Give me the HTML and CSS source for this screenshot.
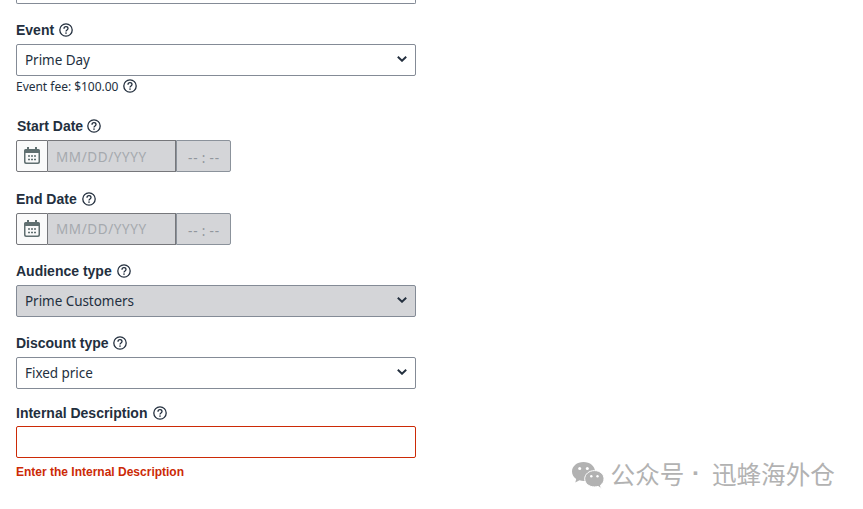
FILE: index.html
```
<!DOCTYPE html>
<html lang="en">
<head>
<meta charset="utf-8">
<title>Promotion details</title>
<link rel="stylesheet" href="styles.css">
</head>
<body>
<svg class="defs" aria-hidden="true">
  <symbol id="help" viewBox="0 0 14 14"><circle cx="7" cy="7" r="6.2" fill="none" stroke="currentColor" stroke-width="1.3"/><path d="M5 5.7C5 4.4 5.8 3.7 7 3.7s2 .7 2 1.8c0 1.4-2 1.5-2 3" fill="none" stroke="currentColor" stroke-width="1.3"/><rect x="6.3" y="9.4" width="1.4" height="1.4" fill="currentColor"/></symbol>
  <symbol id="chevron" viewBox="0 0 10 6"><path d="M.8.8 5 4.8 9.2.8" fill="none" stroke="currentColor" stroke-width="1.9"/></symbol>
  <symbol id="calendar" viewBox="0 0 16 17"><path d="M3 0h2v2h6V0h2v2h1.500a1.500 1.500 0 0 1 1.500 1.500V15a2 2 0 0 1-2 2H2a2 2 0 0 1-2-2V3.500A1.500 1.500 0 0 1 1.500 2H3zM1.500 6v8.500a1 1 0 0 0 1 1h11a1 1 0 0 0 1-1V6z" fill="currentColor" fill-rule="evenodd"/><path d="M4 9h2m1 0h2m1 0h2M4 12.500h2m1 0h2m1 0h2" stroke="currentColor" stroke-width="1.700"/></symbol>
</svg>
<main class="form">
  <div class="select cut"></div>
  <section class="field event">
    <div class="label"><span>Event</span><svg class="help"><use href="#help"/></svg></div>
    <div class="select"><span>Prime Day</span><svg class="chevron"><use href="#chevron"/></svg></div>
    <div class="fee"><span>Event fee: $100.00</span><svg class="help"><use href="#help"/></svg></div>
  </section>
  <section class="field start">
    <div class="label"><span>Start Date</span><svg class="help"><use href="#help"/></svg></div>
    <div class="datetime"><div class="cal"><svg><use href="#calendar"/></svg></div><div class="date"><span>MM/DD/YYYY</span></div><div class="time">--&thinsp;:&thinsp;--</div></div>
  </section>
  <section class="field end">
    <div class="label"><span>End Date</span><svg class="help"><use href="#help"/></svg></div>
    <div class="datetime"><div class="cal"><svg><use href="#calendar"/></svg></div><div class="date"><span>MM/DD/YYYY</span></div><div class="time">--&thinsp;:&thinsp;--</div></div>
  </section>
  <section class="field audience">
    <div class="label"><span>Audience type</span><svg class="help"><use href="#help"/></svg></div>
    <div class="select disabled"><span>Prime Customers</span><svg class="chevron"><use href="#chevron"/></svg></div>
  </section>
  <section class="field discount">
    <div class="label"><span>Discount type</span><svg class="help"><use href="#help"/></svg></div>
    <div class="select"><span>Fixed price</span><svg class="chevron"><use href="#chevron"/></svg></div>
  </section>
  <section class="field internal">
    <div class="label"><span>Internal Description</span><svg class="help"><use href="#help"/></svg></div>
    <div class="select invalid"></div>
    <div class="error">Enter the Internal Description</div>
  </section>
</main>
<aside class="watermark" lang="zh-CN">
  <svg viewBox="0 0 32 27"><path d="M11.500 0C5 0 0 4.200 0 9.500c0 3 1.600 5.600 4.200 7.400L3.300 20.500l4.200-2.200c1.300.4 2.600.6 4 .6 6.500 0 11.500-4.100 11.500-9.400S18 0 11.500 0z" fill="currentColor"/><path d="M22.500 8.600c-5.500 0-9.800 3.600-9.800 8.200s4.300 8.100 9.800 8.100c1.200 0 2.400-.2 3.500-.5l3.300 2.100-.8-3.300c2.200-1.500 3.500-3.700 3.500-6.400 0-4.600-4-8.200-9.500-8.200z" fill="currentColor" stroke="#fff"/><g fill="#fff"><circle cx="7.700" cy="6.600" r="1.500"/><circle cx="15.300" cy="6.600" r="1.500"/><circle cx="19.300" cy="14.300" r="1.200"/><circle cx="25.500" cy="14.300" r="1.200"/></g></svg>
  <span>公众号</span><span class="dot">·</span><span>迅蜂海外仓</span>
</aside>
</body>
</html>
```
FILE: styles.css
```
* { box-sizing: border-box; }
body {
  margin: 0;
  height: 509px;
  overflow: hidden;
  position: relative;
  background: #fff;
  color: #232f3e;
  font-family: "Noto Sans", sans-serif;
  font-size: 13.5px;
}
.defs { position: absolute; width: 0; height: 0; }
.form { width: 400px; margin-left: 16px; }
.select {
  display: flex;
  align-items: center;
  justify-content: space-between;
  height: 32px;
  padding: 0 8px;
  border: 1px solid #848b96;
  border-radius: 2px;
  background: #fff;
  letter-spacing: -0.05px;
}
.cut { height: 4px; border-top: 0; border-radius: 0 0 2px 2px; }
.disabled { background: #d4d5d8; }
.invalid { border-color: #cc2a06; }
.chevron { width: 10px; height: 6px; margin-bottom: 2px; }
.label {
  display: flex;
  align-items: center;
  gap: 4.9px;
  height: 20px;
  margin-bottom: 4px;
  font: bold 14px/20px "Liberation Sans", sans-serif;
}
.help { width: 14px; height: 14px; flex: none; }
.event { margin-top: 16px; }
.event .label { gap: 4.5px; }
.fee {
  display: flex;
  align-items: center;
  gap: 4.5px;
  height: 20px;
  font-size: 12px;
  letter-spacing: -0.02px;
}
.start { margin-top: 20px; }
.start .label { padding-left: 1px; gap: 4px; }
.end { margin-top: 17px; }
.audience, .discount { margin-top: 16px; }
.internal { margin-top: 14px; }
.internal .label { margin-bottom: 3px; gap: 5.3px; }
.datetime { display: flex; height: 32px; }
.cal, .date, .time {
  display: flex;
  align-items: center;
  border: 1px solid #76777b;
}
.cal {
  width: 32px;
  justify-content: center;
  border-radius: 2px 0 0 2px;
  background: #fafafa;
  color: #606f70;
}
.cal svg { width: 16px; height: 17px; margin-bottom: 1px; }
.end .cal svg { margin-bottom: 2px; }
.date {
  width: 128px;
  padding: 2px 0 0 8px;
  border-left: 0;
  background: #d4d5d8;
  color: #a5a9ae;
  letter-spacing: 0.6px;
}
.end .date { padding-top: 0; }
.time {
  width: 55px;
  justify-content: center;
  padding: 4px 0 0 1px;
  border-color: #8b929b;
  border-radius: 0 2px 2px 0;
  background: #d4d5d8;
  color: #91969d;
  letter-spacing: 0.9px;
}
.error {
  margin-top: 4px;
  color: #cc2a06;
  font: bold 12px/20px "Liberation Sans", sans-serif;
}
.watermark {
  position: absolute;
  left: 572px;
  top: 455px;
  display: flex;
  align-items: center;
  height: 36px;
  color: #b2b2b2;
  font: 24.6px/36px "Noto Sans CJK SC", sans-serif;
  white-space: nowrap;
}
.watermark svg { width: 32px; height: 27px; margin: 4px 6.6px 0 0; }
.dot { width: 27.5px; padding-left: 7.5px; font-family: "Liberation Sans", sans-serif; font-weight: bold; }
```
